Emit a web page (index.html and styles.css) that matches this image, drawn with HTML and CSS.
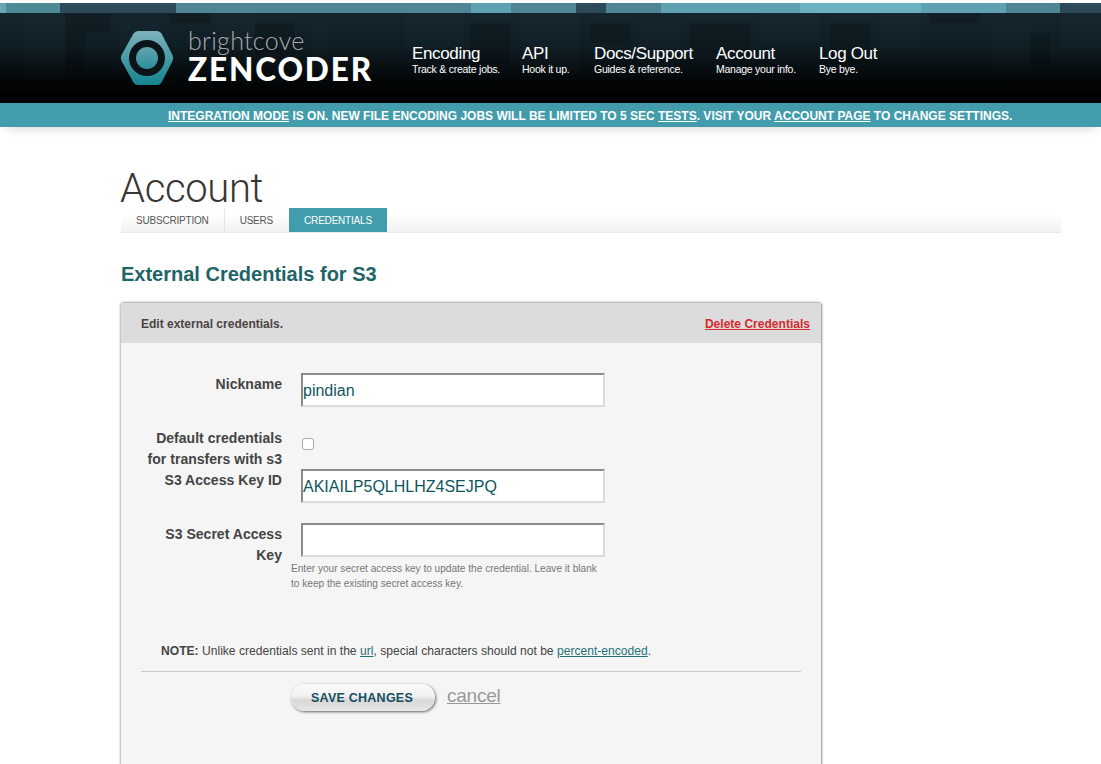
FILE: index.html
```html
<!DOCTYPE html>
<html lang="en">
<head>
<meta charset="utf-8">
<title>Account - Zencoder</title>
<link rel="stylesheet" href="styles.css">
</head>
<body>
<div class="band">
  <i class="s" style="width:6px;background:#66a7b4"></i>
  <i class="s" style="width:54px;background:#4f8996"></i>
  <i class="s" style="width:116px;background:#2c4a59"></i>
  <i class="s" style="width:295px;background:#4f8594"></i>
  <i class="s" style="width:40px;background:#5fa1b0"></i>
  <i class="s" style="width:65px;background:#4f8594"></i>
  <i class="s" style="width:30px;background:#2c4a59"></i>
  <i class="s" style="width:55px;background:#4f8594"></i>
  <i class="s" style="width:139px;background:#5fa1b0"></i>
  <i class="s" style="width:121px;background:#6ab2c1"></i>
  <i class="s" style="width:85px;background:#5fa1b0"></i>
  <i class="s" style="width:54px;background:#4f8594"></i>
  <i class="s" style="width:41px;background:#2c4a59"></i>
</div>
<header class="masthead">
  <svg class="mosaic" width="1101" height="90" viewBox="0 0 1101 90" aria-hidden="true">
    <g fill="#fff" fill-opacity=".012">
      <rect x="25" y="0" width="40" height="64"/><rect x="120" y="10" width="40" height="40"/>
      <rect x="215" y="0" width="40" height="30"/><rect x="310" y="10" width="20" height="50"/>
      <rect x="405" y="0" width="60" height="40"/><rect x="520" y="0" width="60" height="60"/>
      <rect x="640" y="10" width="40" height="50"/><rect x="760" y="0" width="60" height="30"/>
      <rect x="880" y="0" width="40" height="40"/><rect x="990" y="10" width="40" height="50"/>
      <rect x="1060" y="0" width="41" height="40"/>
    </g>
    <g fill="#000" fill-opacity=".14">
      <rect x="65" y="0" width="45" height="20"/><rect x="65" y="20" width="20" height="40"/>
      <rect x="170" y="0" width="40" height="10"/><rect x="255" y="10" width="40" height="30"/>
      <rect x="470" y="10" width="40" height="40"/><rect x="590" y="10" width="40" height="20"/>
      <rect x="690" y="10" width="60" height="30"/><rect x="830" y="10" width="40" height="40"/>
      <rect x="930" y="0" width="50" height="10"/><rect x="1030" y="20" width="20" height="30"/>
    </g>
  </svg>
  <div class="inner">
    <a class="logo" href="#">
      <svg class="hex" width="54" height="56" viewBox="0 0 54 56" aria-hidden="true">
        <defs>
          <linearGradient id="hg" x1="0" y1="0" x2="0" y2="1">
            <stop offset="0" stop-color="#7db2ba"/><stop offset="1" stop-color="#148491"/>
          </linearGradient>
          <linearGradient id="cg" x1="0" y1="0" x2="0" y2="1">
            <stop offset="0" stop-color="#62a4af"/><stop offset="1" stop-color="#2c8e9c"/>
          </linearGradient>
        </defs>
        <path d="M18 1H37Q40 1 41.500 3.500L52.500 25Q54 28 52.500 31L41.500 52.500Q40 55 37 55H18Q15 55 13.500 52.500L1.500 31Q0 28 1.500 25L13.500 3.500Q15 1 18 1Z" fill="url(#hg)"/>
        <circle cx="27" cy="28" r="18" fill="#0a1419"/>
        <circle cx="27" cy="28" r="11" fill="url(#cg)"/>
      </svg>
      <span class="wordmark">
        <span class="bc">brightcove</span>
        <span class="zc">ZENCODER</span>
      </span>
    </a>
    <nav class="nav">
      <a class="item w1" href="#"><b>Encoding</b><small>Track &amp; create jobs.</small></a>
      <a class="item w2" href="#"><b>API</b><small>Hook it up.</small></a>
      <a class="item w3" href="#"><b>Docs/Support</b><small>Guides &amp; reference.</small></a>
      <a class="item w4" href="#"><b>Account</b><small>Manage your info.</small></a>
      <a class="item" href="#"><b>Log Out</b><small>Bye bye.</small></a>
    </nav>
  </div>
</header>
<div class="notice"><a href="#">INTEGRATION MODE</a> IS ON. NEW FILE ENCODING JOBS WILL BE LIMITED TO 5 SEC <a href="#">TESTS</a>. VISIT YOUR <a href="#">ACCOUNT PAGE</a> TO CHANGE SETTINGS.</div>
<main class="page">
  <h1 class="title">Account</h1>
  <div class="tabs">
    <a class="tab" href="#">SUBSCRIPTION</a>
    <a class="tab" href="#">USERS</a>
    <a class="tab on" href="#">CREDENTIALS</a>
  </div>
  <h2 class="sub">External Credentials for S3</h2>
  <section class="card">
    <div class="card-head">
      <strong>Edit external credentials.</strong>
      <a class="del" href="#">Delete Credentials</a>
    </div>
    <form class="form">
      <div class="row gap">
        <label class="lab">Nickname</label>
        <div class="field"><input class="txt" type="text" value="pindian"></div>
      </div>
      <div class="row">
        <label class="lab">Default credentials<br>for transfers with s3</label>
        <div class="field"><span class="check"></span></div>
      </div>
      <div class="row gap">
        <label class="lab">S3 Access Key ID</label>
        <div class="field"><input class="txt" type="text" value="AKIAILP5QLHLHZ4SEJPQ"></div>
      </div>
      <div class="row">
        <label class="lab">S3 Secret Access<br>Key</label>
        <div class="field">
          <input class="txt" type="text" value="">
          <p class="hint">Enter your secret access key to update the credential. Leave it blank<br>to keep the existing secret access key.</p>
        </div>
      </div>
      <p class="note"><b>NOTE:</b> Unlike credentials sent in the <a href="#">url</a>, special characters should not be <a href="#">percent-encoded</a>.</p>
      <div class="actions">
        <button class="save" type="button">SAVE CHANGES</button>
        <a class="cancel" href="#">cancel</a>
      </div>
    </form>
  </section>
</main>
</body>
</html>
```
FILE: styles.css
```css
html, body { margin: 0; padding: 0; height: 764px; overflow: hidden; background: #fff; }
body { font-family: "Liberation Sans", Arial, sans-serif; color: #444; padding-top: 3px; box-sizing: border-box; }
a { color: inherit; }

.band { display: flex; height: 10px; }
.s { display: block; height: 10px; }

.masthead { position: relative; height: 90px; background: linear-gradient(#14252d 0%, #0f1e25 35%, #05090b 70%, #000 92%); overflow: hidden; }
.mosaic { position: absolute; left: 0; top: 0; }
.inner { position: relative; display: flex; padding: 17px 0 0 120px; }

.logo { display: flex; text-decoration: none; width: 292px; }
.hex { flex: none; margin-right: 14px; }
.wordmark { display: flex; flex-direction: column; }
.bc { font-family: Lato, sans-serif; font-weight: 300; font-size: 25px; line-height: 24px; color: #a9a9a9; letter-spacing: .3px; margin-top: -2px; }
.zc { font-family: Lato, sans-serif; font-weight: 900; font-size: 31.500px; line-height: 26px; color: #fff; letter-spacing: 1.9px; margin-top: 4px; }

.nav { display: flex; padding-top: 14px; }
.item { display: flex; flex-direction: column; color: #fff; text-decoration: none; width: 103px; }
.w1 { width: 110px; }
.w2 { width: 72px; }
.w3 { width: 122px; }
.item b { font-weight: 400; font-size: 17px; line-height: 19px; letter-spacing: -.35px; }
.item small { font-size: 10.500px; line-height: 13px; letter-spacing: -.25px; }

.notice { position: relative; height: 24px; line-height: 26px; background: #429cab; color: #fff; font-size: 12px; font-weight: 700; padding-left: 168px; white-space: nowrap; box-shadow: 0 6px 12px -6px rgba(0,0,0,.22); }
.notice a { color: #fff; }

.page { padding: 42px 40px 0 121px; }
.title { margin: 0 0 0 -1px; font-family: Roboto, sans-serif; font-weight: 300; font-size: 40px; line-height: 39px; color: #3a3535; letter-spacing: -.35px; }
.tabs { display: flex; height: 25px; background: linear-gradient(#fff 25%, #f1f1f1); border-bottom: 1px solid #e8e8e8; box-sizing: border-box; }
.tab { display: block; height: 24px; line-height: 26px; padding: 0 15px; font-size: 10px; letter-spacing: -.2px; color: #555; text-decoration: none; }
.tab:first-child { border-right: 1px solid #e6e6e6; }
.tab.on { background: #429cab; color: #fff; margin-left: 1px; }

.sub { margin: 29px 0 0; font-size: 20px; line-height: 24px; font-weight: 700; color: #1f6468; }

.card { width: 700px; height: 520px; margin-top: 17px; background: #f5f5f5; box-shadow: 0 0 3px rgba(0,0,0,.6), 1px 0 2px rgba(0,0,0,.2); border-radius: 2px 2px 0 0; }
.card-head { display: flex; justify-content: space-between; align-items: center; height: 40px; padding: 2px 11px 0 20px; background: #dcdcdc; font-size: 12px; box-sizing: border-box; }
.card-head strong { color: #4a4444; }
.del { color: #d52b2f; font-weight: 700; letter-spacing: .02px; }

.form { padding-top: 31px; }
.row { display: grid; grid-template-columns: 161px 1fr; column-gap: 9px; }
.row.gap { margin-bottom: 21px; }
.lab { text-align: right; font-size: 14px; line-height: 21px; font-weight: 700; color: #444; letter-spacing: .03px; }
.field { min-width: 0; margin-top: -1px; }
.txt { display: block; width: 304px; height: 34px; margin: 0 0 0 10px; padding: 1px 0 0; box-sizing: border-box; background: #fff; border: 2px solid #dcdcdc; border-top-color: #8a8a8a; border-left-color: #8a8a8a; font-family: "Liberation Sans", Arial, sans-serif; font-size: 16px; color: #0f5561; border-radius: 0; outline: none; }
.check { display: block; width: 12px; height: 12px; margin: 11px 0 0 11px; background: #fff; border: 1px solid #aaa; border-radius: 3px; box-sizing: border-box; }
.hint { margin: 4px 0 0; font-size: 10.100px; line-height: 15px; color: #777; }

.note { margin: 51px 0 0 40px; font-size: 12.100px; line-height: 18px; color: #444; }
.note a { color: #1f7378; }

.actions { display: flex; align-items: flex-start; margin: 11px 20px 0; padding: 12px 0 0 150px; border-top: 1px solid #ccc; }
.save { width: 144px; height: 27px; padding: 0 2px 0 0; border: 0; border-radius: 14px; background: linear-gradient(#fafafa 0%, #f2f2f2 45%, #d8d8d8 60%, #e6e6e6 100%); box-shadow: 1px 1px 3px rgba(0,0,0,.6); font-family: "Liberation Sans", Arial, sans-serif; font-size: 12.500px; font-weight: 700; color: #14505f; letter-spacing: .25px; }
.cancel { margin: 1px 0 0 12px; font-size: 19px; line-height: 22px; color: #999; letter-spacing: -.25px; }
```
